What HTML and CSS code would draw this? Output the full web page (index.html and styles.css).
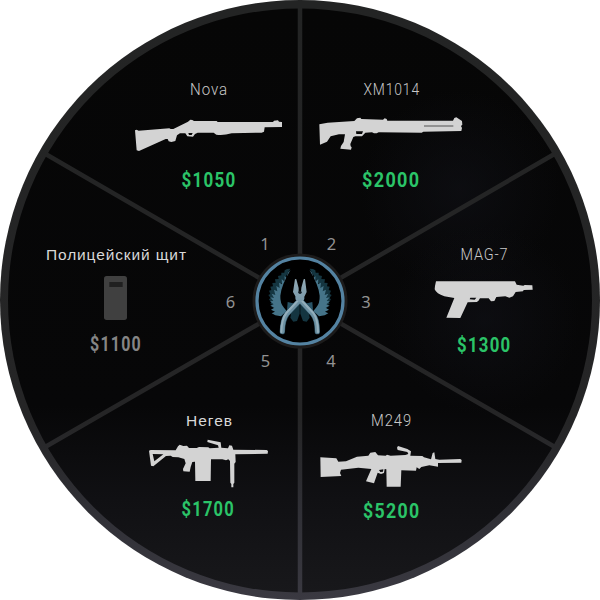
FILE: index.html
```html
<!DOCTYPE html>
<html lang="ru">
<head>
<meta charset="utf-8">
<title>Меню закупки</title>
<link rel="stylesheet" href="styles.css">
</head>
<body>
<svg class="wheel" viewBox="0 0 600 600" width="600" height="600">
  <defs>
    <linearGradient id="rim" gradientUnits="userSpaceOnUse" x1="0" y1="0" x2="0" y2="600">
      <stop offset="0" stop-color="#232424"/>
      <stop offset=".7" stop-color="#252526"/>
      <stop offset=".85" stop-color="#303036"/>
      <stop offset="1" stop-color="#3a3941"/>
    </linearGradient>
    <linearGradient id="face" x1="0" y1="0" x2="0" y2="1">
      <stop offset="0" stop-color="#060606"/>
      <stop offset=".68" stop-color="#070708"/>
      <stop offset=".84" stop-color="#101013"/>
      <stop offset="1" stop-color="#18181b"/>
    </linearGradient>
    <radialGradient id="sheen">
      <stop offset="0" stop-color="#12131a" stop-opacity=".5"/>
      <stop offset="1" stop-color="#12131a" stop-opacity="0"/>
    </radialGradient>
    <linearGradient id="steel" x1="0" y1="0" x2="0" y2="1">
      <stop offset="0" stop-color="#91a9b5"/>
      <stop offset="1" stop-color="#7899a9"/>
    </linearGradient>
    <g id="wing">
      <path class="wing-back" d="M211 131 L201 132 L194 136 L193 143 L184 143 L184 151 L174 153 L176 162 L165 163 L167 173 L157 174 L159 184 L151 185 L154 195 L147 197 L151 207 L145 210 L151 218 L147 224 L154 230 L151 237 L160 240 L158 248 L168 249 L176 230 L182 180 Z"/>
      <path class="wing-front" d="M212 134 L204 143 L199 158 L194 153 L193 168 L185 163 L186 178 L177 173 L179 189 L169 183 L172 199 L162 194 L166 210 L155 206 L162 219 L151 217 L160 228 L150 229 L161 238 L151 242 L163 248 L153 254 L165 260 L155 265 L166 271 L183 274 L200 258 L192 248 Q180 235 181 212 Q184 180 212 134 Z"/>
      <path class="wing-tail" d="M203 231 L219 235 L230 230 L227 244 L212 260 L201 256 Z"/>
      <path class="wing-back" d="M214 262 L230 240 L239 238 L239 266 L231 288 L220 290 L211 278 Z"/>
    </g>
  </defs>

  <circle cx="300" cy="300" r="300" fill="url(#rim)"/>
  <circle cx="300" cy="300.500" r="292" fill="url(#face)"/>
  <circle cx="460" cy="190" r="100" fill="url(#sheen)"/>
  <circle cx="485" cy="320" r="95" fill="url(#sheen)"/>
  <path class="spoke" d="M300 7V593M46 154.300L300 301.500L554 154.300M46 446.500L300 300L554 446.500"/>

  <g class="gun" transform="translate(120 70) scale(.33333)">
    <path fill-rule="evenodd" d="M45 181 L50 179 L56 182 L148 175 L152 177 L160 177 L204 155 L211 149 L217 150 L222 153 L290 153 L293 156 L459 156 L462 152 L474 151 L477 155 L486 156 L486 171 L434 172 L432 185 L425 188 L335 190 Q310 197 289 194 L281 188 L233 188 L225 192 L219 200 L202 199 L196 190 L180 190 L171 196 L166 213 L154 216 L146 214 L143 207 L137 207 L57 243 L50 241 Z M205 189 L207 195 L215 195 L218 189 Z"/>
  </g>
  <g class="gun" transform="translate(305 70) scale(.33333)">
    <path fill-rule="evenodd" d="M43 163 L68 158 L148 153 L156 145 L166 143 L169 147 L234 149 L239 145 L245 147 L247 152 L444 152 L448 144 L454 142 L471 153 L472 164 L468 168 L471 174 L469 183 L355 185 L350 188 L221 187 L215 190 L207 190 L201 187 L181 188 L171 199 L151 199 L145 201 L136 222 L137 229 L140 232 L138 239 L106 236 L108 228 L116 216 L120 193 L102 193 L77 199 L66 215 L45 224 Z M153 184 L154 192 L171 192 L174 184 Z"/>
    <path class="slot" d="M357 168H445"/>
  </g>
  <g class="gun" transform="translate(420 235) scale(.33333)">
    <path fill-rule="evenodd" d="M48 139 L285 139 L290 149 L310 152 L314 150 L337 151 L338 164 L311 165 L309 169 L287 171 L279 184 L268 188 L256 184 L229 186 L223 198 L213 199 L206 190 L180 190 L175 198 L170 201 L143 202 L121 249 L79 248 L103 189 L73 184 Q49 176 44 163 L45 153 Z M151 188 L149 193 L164 194 L169 188 Z"/>
  </g>
  <g transform="translate(30 235) scale(.33333)">
    <rect class="shield" x="222" y="123" width="69" height="132" rx="8"/>
    <rect class="shield-slit" x="238" y="141" width="40" height="15"/>
  </g>
  <g class="gun" transform="translate(130 400) scale(.33333)">
    <path fill-rule="evenodd" d="M57 152 L62 150 L137 151 L144 139 L149 134 L160 138 L171 137 L177 144 L200 144 L207 141 L235 142 L239 145 L266 143 L264 136 L232 126 L233 119 L272 127 L274 143 L294 145 L298 136 L306 137 L310 149 L410 150 L414 153 L413 161 L316 163 L317 186 L313 191 L313 248 L310 252 L310 262 L304 262 L304 252 L301 248 L300 183 L295 178 L288 181 L277 178 L243 178 L242 243 L196 243 L195 185 L187 186 L182 201 L179 215 L160 214 L159 207 L167 190 L163 177 L145 172 L128 171 L122 167 L108 168 L70 199 L63 197 Z M68 162 L73 184 L100 163 Z"/>
  </g>
  <g class="gun" transform="translate(305 400) scale(.33333)">
    <path fill-rule="evenodd" d="M46 172 L94 175 L100 185 L123 184 L156 170 L190 167 L196 158 L211 156 L219 166 L242 167 L246 164 L257 167 L301 165 L310 162 L307 156 L278 150 L276 143 L279 138 L307 147 L318 154 L316 167 L352 168 L357 172 L378 178 L383 159 L388 157 L391 177 L403 179 L466 177 L470 180 L469 188 L399 189 L399 200 L373 196 L349 201 L343 207 L335 202 L333 212 L289 211 L287 260 L245 260 L244 208 L239 207 L237 219 L228 222 L218 218 L207 250 L183 244 L199 207 L160 203 L108 209 L105 219 L109 228 L47 231 Z M222 210 L226 216 L234 215 L235 208 Z"/>
  </g>

  <g class="name">
    <text x="190" y="94.500" textLength="38" lengthAdjust="spacingAndGlyphs">Nova</text>
    <text x="363.500" y="94.500" textLength="56.500" lengthAdjust="spacingAndGlyphs">XM1014</text>
    <text x="460.500" y="260.300" textLength="48" lengthAdjust="spacingAndGlyphs">MAG-7</text>
    <text x="371" y="426" textLength="41" lengthAdjust="spacingAndGlyphs">M249</text>
    <text class="cyrillic" x="46" y="260" textLength="140">Полицейский щит</text>
    <text class="cyrillic" x="186" y="426" textLength="46">Негев</text>
  </g>
  <g class="price">
    <text x="181.500" y="186.500" textLength="55" lengthAdjust="spacingAndGlyphs">$1050</text>
    <text x="362" y="186.500" textLength="58.500" lengthAdjust="spacingAndGlyphs">$2000</text>
    <text x="457" y="352" textLength="54.500" lengthAdjust="spacingAndGlyphs">$1300</text>
    <text x="363" y="517.500" textLength="57.500" lengthAdjust="spacingAndGlyphs">$5200</text>
    <text x="181.500" y="516.300" textLength="53.500" lengthAdjust="spacingAndGlyphs">$1700</text>
    <text class="unavailable" x="90" y="350.700" textLength="52" lengthAdjust="spacingAndGlyphs">$1100</text>
  </g>

  <circle class="hub-shadow" cx="300" cy="301" r="47.500"/>
  <circle class="hub" cx="300" cy="301" r="43"/>
  <g transform="translate(220 225) scale(.33333)">
    <use href="#wing"/>
    <use href="#wing" transform="matrix(-1 0 0 1 480 0)"/>
    <path class="handle-edge" d="M245 220 L201 267 Q188 283 187 320 M235 220 L278 267 Q292 283 292 320"/>
    <path class="handle" d="M245 220 L201 267 Q188 283 187 320 M235 220 L278 267 Q292 283 292 320"/>
    <path class="handle-light" d="M242 218 L199 264 Q185 281 184 321 M237 218 L280 264 Q293 281 294 321"/>
    <path fill="url(#steel)" d="M225 162 L229 163 L236 189 L236 202 L243 202 L244 188 L251 163 L255 162 L260 201 L253 215 L252 224 L240 232 L227 224 L226 214 L219 201 Z"/>
    <circle cx="240" cy="202" r="5" fill="#101d24"/>
  </g>
  <g class="slot-number">
    <text x="265" y="250">1</text>
    <text x="331.500" y="250">2</text>
    <text x="366" y="308">3</text>
    <text x="331" y="366.500">4</text>
    <text x="265.500" y="366.500">5</text>
    <text x="230.500" y="308">6</text>
  </g>
</svg>
</body>
</html>
```
FILE: styles.css
```css
body {
  margin: 0;
  background: #fff;
}

.wheel {
  display: block;
}

.spoke {
  fill: none;
  stroke: url(#rim);
  stroke-width: 4.5;
}

.gun {
  fill: #d3d3d3;
}

.slot {
  fill: none;
  stroke: #858585;
  stroke-width: 5;
}

.shield {
  fill: #404040;
}

.shield-slit {
  fill: #202020;
}

.name {
  font: 300 16.5px Roboto, sans-serif;
  letter-spacing: 1px;
  fill: #c8c8c8;
}

.name .cyrillic {
  font: 400 15.5px "Liberation Sans", Arial, sans-serif;
  letter-spacing: 0;
  fill: #d8d8d8;
}

.price {
  font: 700 20px Roboto, sans-serif;
  letter-spacing: 1.5px;
  fill: #2bc468;
}

.price .unavailable {
  fill: #858585;
}

.slot-number {
  font: 400 16.5px "Noto Sans", sans-serif;
  text-anchor: middle;
  fill: #929292;
}

.hub-shadow {
  fill: #1c1b1b;
}

.hub {
  fill: #000;
  stroke: #5483a2;
  stroke-width: 3.2;
}

.wing-back {
  fill: #143540;
}

.wing-front {
  fill: #457489;
}

.wing-tail {
  fill: #285467;
}

.handle-edge,
.handle,
.handle-light {
  fill: none;
  stroke-linecap: round;
}

.handle-edge {
  stroke: #305466;
  stroke-width: 16;
}

.handle {
  stroke: #6d91a2;
  stroke-width: 13;
}

.handle-light {
  stroke: #93aebb;
  stroke-width: 6;
}
```
